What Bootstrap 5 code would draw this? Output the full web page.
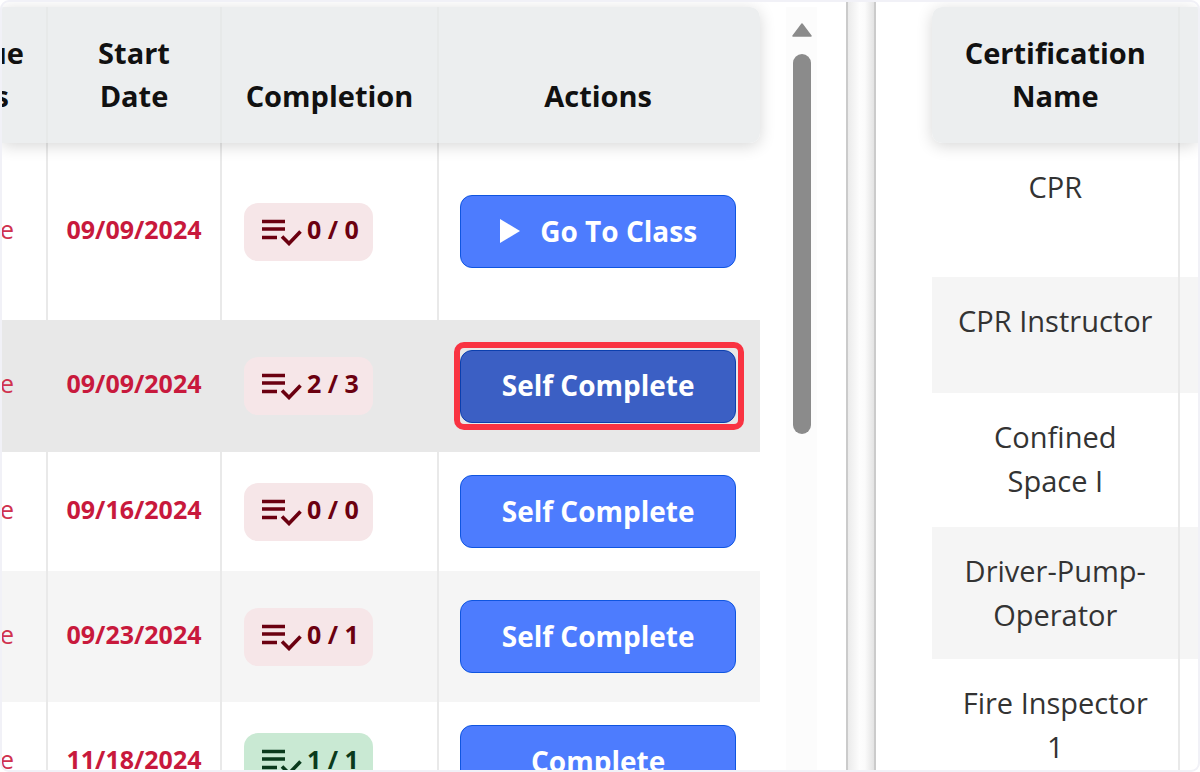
<!DOCTYPE html>
<html lang="en">
<head>
<meta charset="utf-8">
<meta name="viewport" content="width=device-width, initial-scale=1">
<title>Training classes and certifications</title>
<link href="https://cdn.jsdelivr.net/npm/bootstrap@5.3.0/dist/css/bootstrap.min.css" rel="stylesheet">
<style>
  body { font-family: "Open Sans", "Noto Sans", sans-serif; background: #fff; }
  .frame { height: 100vh; border: 2px solid #f1f1f7; border-radius: 9px; display: grid; grid-template-columns: minmax(0, 1fr) 30px 26.9%; }
  .pane { padding-top: 5px; min-width: 0; }
  .splitter { border: solid #cbcbcb; border-width: 0 2px; background: linear-gradient(90deg, #ebebeb, #fdfdfd 45%, #fbfbfb 65%, #e3e3e3); }

  .grid-table { --bs-table-bg: transparent; border-collapse: separate; border-spacing: 0; table-layout: fixed; text-align: center; color: #333; }
  .grid-table thead { position: relative; z-index: 1; box-shadow: 0 3px 16px rgba(0, 0, 0, .16); border-radius: 10px; }
  .grid-table > thead > tr > th { background: #eceeef; color: #111; font-size: 29px; font-weight: 700; line-height: 43px; padding: 24px 0 26px; border: 0 solid #e7e9e9; border-right-width: 2px; vertical-align: bottom; }
  .grid-table > tbody > tr > td { padding: 0; border: 0 solid #e9e9e9; border-right-width: 2px; vertical-align: middle; }
  .grid-table > * > tr > :last-child { border-right-width: 0 !important; }
  .grid-table.classes > * > tr > :last-child { padding-right: 3px; }
  .grid-table tr.shaded > td { background: #f5f5f5; }
  .grid-table tr.hovered > td { background: #e8e8e8; border-color: #e8e8e8; }
  .classes th:last-child { border-radius: 0 10px 10px 0; }
  .classes thead { border-radius: 0 10px 10px 0; }
  .certs th:first-child { border-radius: 10px 0 0 10px; }
  .certs > tbody > tr > td { font-size: 29px; line-height: 44px; padding: 22px 0; vertical-align: top; }

  .h-tall { height: 177px; } .h-mid { height: 132px; } .h-low { height: 119px; } .h-shaded { height: 131px; }
  .h-cert { height: 134px; } .h-cert-low { height: 116px; } .h-cert-mid { height: 132px; }

  .grid-table > tbody > tr > td.status { color: #d0324f; font-size: 25px; padding-bottom: 4px; }
  .status div { padding-right: 32px; }
  .edge div { padding-right: 22px; }
  .edge div + div { padding-right: 37px; }
  .grid-table > tbody > tr > td.date { color: #c8193c; font-size: 25px; font-weight: 700; padding-bottom: 4px; }

  .tally { width: 129px; height: 58px; border-radius: 14px; margin-left: 22px; padding-left: 18px; background: #f6e6e8; color: #6b0010; font-size: 25px; font-weight: 700; white-space: nowrap; }
  .tally.done { background: #c9e9d3; color: #0a3a1c; }
  .tally svg { width: 40px; height: 28px; margin-right: 5px; flex: none; }

  .btn-act { --bs-btn-bg: #4d7cfe; --bs-btn-border-color: #0f55e0; --bs-btn-color: #fff; --bs-btn-hover-bg: #3b5fc4; --bs-btn-hover-color: #fff; --bs-btn-border-radius: 12px; width: 276px; height: 73px; font-size: 28px; font-weight: 700; padding: 0 0 2px; }
  .btn-act.current { --bs-btn-bg: #3b5fc4; --bs-btn-border-color: #0b3fae; position: relative; }
  .btn-act.current::after { content: ""; position: absolute; inset: -9px -9px -8px -7px; border: 6px solid #f93342; border-radius: 10px; }
  .btn-act svg { width: 22px; height: 26px; margin-right: 19px; }

  .track { flex: 0 0 31px; margin: 0 29px 0 26px; padding-top: 16px; background: #fcfcfc; }
  .track svg { width: 20px; height: 14px; }
  .thumb { width: 18px; height: 380px; margin-top: 17px; border-radius: 9px; background: #8b8b8b; }
</style>
</head>
<body>
<svg class="d-none" aria-hidden="true">
  <symbol id="checklist" viewBox="0 0 40 28">
    <path d="M0 3.500H23M0 11H23M0 19.500H15" fill="none" stroke="currentColor" stroke-width="3.600"/>
    <path d="M20 18.500L27 25.500L38.500 13.500" fill="none" stroke="currentColor" stroke-width="3.600"/>
  </symbol>
</svg>
<main class="frame overflow-hidden">
  <section class="pane d-flex overflow-hidden" aria-label="Classes">
    <div class="flex-grow-1">
      <table class="table grid-table classes mb-0 w-100">
        <colgroup><col style="width:46px"><col style="width:174px"><col style="width:217px"><col></colgroup>
        <thead>
          <tr><th class="edge"><div class="d-flex justify-content-end">ue</div><div class="d-flex justify-content-end">s</div></th><th>Start<br>Date</th><th>Completion</th><th>Actions</th></tr>
        </thead>
        <tbody>
          <tr class="h-tall"><td class="status"><div class="d-flex justify-content-end">e</div></td><td class="date">09/09/2024</td>
            <td><div class="tally d-flex align-items-center"><svg><use href="#checklist"/></svg><span class="pb-1">0 / 0</span></div></td>
            <td><button type="button" class="btn btn-act d-inline-flex align-items-center justify-content-center"><svg viewBox="0 0 22 26" aria-hidden="true"><path d="M1 1L21 13L1 25Z" fill="currentColor"/></svg>Go To Class</button></td></tr>
          <tr class="h-mid hovered"><td class="status"><div class="d-flex justify-content-end">e</div></td><td class="date">09/09/2024</td>
            <td><div class="tally d-flex align-items-center"><svg><use href="#checklist"/></svg><span class="pb-1">2 / 3</span></div></td>
            <td><button type="button" class="btn btn-act current">Self Complete</button></td></tr>
          <tr class="h-low"><td class="status"><div class="d-flex justify-content-end">e</div></td><td class="date">09/16/2024</td>
            <td><div class="tally d-flex align-items-center"><svg><use href="#checklist"/></svg><span class="pb-1">0 / 0</span></div></td>
            <td><button type="button" class="btn btn-act">Self Complete</button></td></tr>
          <tr class="h-shaded shaded"><td class="status"><div class="d-flex justify-content-end">e</div></td><td class="date">09/23/2024</td>
            <td><div class="tally d-flex align-items-center"><svg><use href="#checklist"/></svg><span class="pb-1">0 / 1</span></div></td>
            <td><button type="button" class="btn btn-act">Self Complete</button></td></tr>
          <tr class="h-low"><td class="status"><div class="d-flex justify-content-end">e</div></td><td class="date">11/18/2024</td>
            <td><div class="tally done d-flex align-items-center"><svg><use href="#checklist"/></svg><span class="pb-1">1 / 1</span></div></td>
            <td><button type="button" class="btn btn-act">Complete</button></td></tr>
        </tbody>
      </table>
    </div>
    <div class="track d-flex flex-column align-items-center" aria-hidden="true">
      <svg viewBox="0 0 20 14"><path d="M10 1L19 13H1Z" fill="#8b8b8b" stroke="#8b8b8b" stroke-width="1.500" stroke-linejoin="round"/></svg>
      <div class="thumb"></div>
    </div>
  </section>
  <div class="splitter"></div>
  <section class="pane overflow-hidden" aria-label="Certifications">
    <div class="ps-5 ms-2">
      <table class="table grid-table certs mb-0 w-100">
        <colgroup><col style="width:248px"><col></colgroup>
        <thead><tr><th>Certification<br>Name</th><th></th></tr></thead>
        <tbody>
          <tr class="h-cert"><td>CPR</td><td></td></tr>
          <tr class="h-cert-low shaded"><td>CPR Instructor</td><td></td></tr>
          <tr class="h-cert"><td>Confined<br>Space I</td><td></td></tr>
          <tr class="h-cert-mid shaded"><td>Driver-Pump-<br>Operator</td><td></td></tr>
          <tr class="h-cert"><td>Fire Inspector<br>1</td><td></td></tr>
        </tbody>
      </table>
    </div>
  </section>
</main>
<script src="https://cdn.jsdelivr.net/npm/bootstrap@5.3.0/dist/js/bootstrap.bundle.min.js"></script>
</body>
</html>
